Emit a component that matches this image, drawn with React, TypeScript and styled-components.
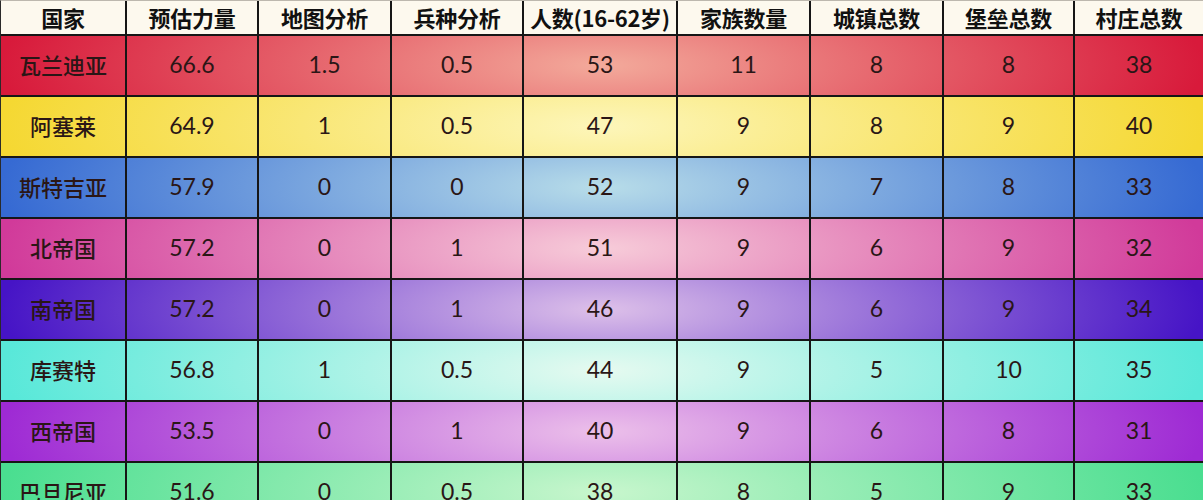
import styled, { createGlobalStyle } from 'styled-components';

const GlobalStyle = createGlobalStyle`
  html, body {
    margin: 0;
    padding: 0;
    background: #ffffff;
  }
`;

type Row = {
  name: string;
  values: string[];
  edge: string;
  center: string;
};

const headers = [
  '国家',
  '预估力量',
  '地图分析',
  '兵种分析',
  '人数(16-62岁)',
  '家族数量',
  '城镇总数',
  '堡垒总数',
  '村庄总数',
];

const rows: Row[] = [
  { name: '瓦兰迪亚', values: ['66.6', '1.5', '0.5', '53', '11', '8', '8', '38'], edge: '#d81a3b', center: '#f3aa9b' },
  { name: '阿塞莱', values: ['64.9', '1', '0.5', '47', '9', '8', '9', '40'], edge: '#f5d832', center: '#fdf6ba' },
  { name: '斯特吉亚', values: ['57.9', '0', '0', '52', '9', '7', '8', '33'], edge: '#366ad3', center: '#b8dde9' },
  { name: '北帝国', values: ['57.2', '0', '1', '51', '9', '6', '9', '32'], edge: '#d13a9a', center: '#f7ccd9' },
  { name: '南帝国', values: ['57.2', '0', '1', '46', '9', '6', '9', '34'], edge: '#4614c6', center: '#ddc0e9' },
  { name: '库赛特', values: ['56.8', '1', '0.5', '44', '9', '5', '10', '35'], edge: '#58e8d9', center: '#e6faf0' },
  { name: '西帝国', values: ['53.5', '0', '1', '40', '9', '6', '8', '31'], edge: '#9e2ad4', center: '#ecc0ea' },
  { name: '巴旦尼亚', values: ['51.6', '0', '0.5', '38', '8', '5', '9', '33'], edge: '#4ade90', center: '#c8f6cd' },
];

export default function App() {
  return (
    <>
      <GlobalStyle />
      <Table>
        <HeaderRow>
          {headers.map((h) => (
            <HeadCell key={h}>{h}</HeadCell>
          ))}
        </HeaderRow>
        {rows.map((r) => (
          <DataRow key={r.name} $edge={r.edge} $center={r.center}>
            <NameCell>{r.name}</NameCell>
            {r.values.map((v, i) => (
              <NumCell key={i}>{v}</NumCell>
            ))}
          </DataRow>
        ))}
      </Table>
    </>
  );
}

const columns = '126px 132px 133px 132px 154px 133px 133px 131px 1fr';

const Table = styled.div`
  width: 1203px;
  height: 500px;
  overflow: hidden;
  border-top: 1px solid #bdb8ae;
  border-left: 1px solid #2a2a2a;
  box-sizing: border-box;
`;

const HeaderRow = styled.div`
  display: grid;
  grid-template-columns: ${columns};
  height: 35px;
  box-sizing: border-box;
  background: #fdf9ee;
  border-bottom: 2px solid #161616;
`;

const Cell = styled.div`
  display: flex;
  align-items: center;
  justify-content: center;
  box-sizing: border-box;
  border-right: 2px solid #161616;
  white-space: nowrap;

  &:last-child {
    border-right: none;
  }
`;

const HeadCell = styled(Cell)`
  padding-bottom: 2px;
  color: #111111;
  font-family: 'Noto Sans CJK SC', 'Lato', sans-serif;
  font-size: 22px;
  font-weight: 700;
  letter-spacing: -0.3px;
`;

const DataRow = styled.div<{ $edge: string; $center: string }>`
  display: grid;
  grid-template-columns: ${columns};
  height: 61px;
  box-sizing: border-box;
  border-bottom: 2px solid #161616;
  background: radial-gradient(
    ellipse 50% 240% at 50% 50%,
    ${(p) => p.$center} 0%,
    ${(p) => p.$edge} 100%
  );
`;

const NameCell = styled(Cell)`
  padding-bottom: 3px;
  color: #2a1616;
  font-family: 'Noto Sans CJK SC', sans-serif;
  font-size: 22px;
  font-weight: 500;
`;

const NumCell = styled(Cell)`
  padding-bottom: 3px;
  color: #2a1616;
  font-family: 'Lato', 'Open Sans', sans-serif;
  font-size: 23px;
  font-weight: 400;
`;
